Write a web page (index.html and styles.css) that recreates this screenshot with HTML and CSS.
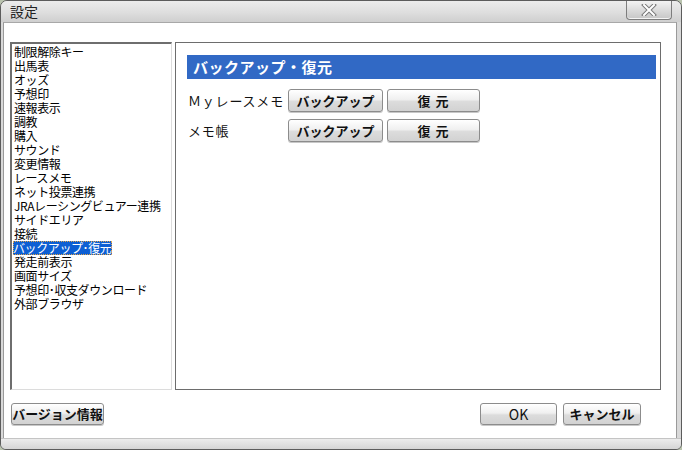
FILE: index.html
```html
<!DOCTYPE html>
<html lang="ja">
<head>
<meta charset="utf-8">
<title>設定</title>
<link rel="stylesheet" href="styles.css">
</head>
<body>
<div class="window">
  <div class="titlebar">
    <span class="title">設定</span>
    <button class="close" aria-label="閉じる">
      <svg width="22" height="12" viewBox="0 0 22 12">
        <path d="M6 1 L16 11 M16 1 L6 11" stroke="#7a7a7a" stroke-width="4" stroke-linecap="square"/>
        <path d="M6 1 L16 11 M16 1 L6 11" stroke="#ffffff" stroke-width="2" stroke-linecap="square"/>
      </svg>
    </button>
  </div>
  <div class="content">
    <div class="main">
      <ul class="list">
        <li>制限解除キー</li>
        <li>出馬表</li>
        <li>オッズ</li>
        <li>予想印</li>
        <li>速報表示</li>
        <li>調教</li>
        <li>購入</li>
        <li>サウンド</li>
        <li>変更情報</li>
        <li>レースメモ</li>
        <li>ネット投票連携</li>
        <li>JRAレーシングビュアー連携</li>
        <li>サイドエリア</li>
        <li>接続</li>
        <li><span class="selected">バックアップ･復元</span></li>
        <li>発走前表示</li>
        <li>画面サイズ</li>
        <li>予想印･収支ダウンロード</li>
        <li>外部ブラウザ</li>
      </ul>
      <div class="panel">
        <div class="panel-header">バックアップ・復元</div>
        <div class="row">
          <span class="label">Ｍｙレースメモ</span>
          <button class="btn btn-backup">バックアップ</button>
          <button class="btn btn-restore">復 元</button>
        </div>
        <div class="row">
          <span class="label">メモ帳</span>
          <button class="btn btn-backup">バックアップ</button>
          <button class="btn btn-restore">復 元</button>
        </div>
      </div>
    </div>
    <div class="footer">
      <button class="btn btn-version">バージョン情報</button>
      <div class="spacer"></div>
      <button class="btn btn-ok">OK</button>
      <button class="btn btn-cancel">キャンセル</button>
    </div>
  </div>
  <div class="bottom-frame"></div>
</div>
</body>
</html>
```
FILE: styles.css
```css
html, body {
  margin: 0;
  padding: 0;
  background: #b9c3ae;
}
body {
  width: 682px;
  height: 450px;
  overflow: hidden;
  font-family: "Noto Sans CJK JP", "Noto Sans", sans-serif;
  color: #111;
}
.window {
  box-sizing: border-box;
  width: 682px;
  height: 450px;
  display: flex;
  flex-direction: column;
  border: 1px solid #5c5c5c;
  border-radius: 7px 7px 6px 6px;
  background: #d9d9d9;
  overflow: hidden;
}
.titlebar {
  box-sizing: border-box;
  height: 21px;
  display: flex;
  align-items: flex-start;
  background: linear-gradient(#ececec, #dedede 55%, #cfcfcf);
}
.title {
  font-size: 14px;
  line-height: 20px;
  padding-left: 9px;
  color: #222;
}
.close {
  margin-left: auto;
  margin-right: 9px;
  width: 46px;
  height: 19px;
  padding: 0;
  border: 1px solid #7d7d7d;
  border-top: none;
  border-radius: 0 0 4px 4px;
  background: linear-gradient(#f3f3f3, #dcdcdc 50%, #c6c6c6);
  display: flex;
  align-items: center;
  justify-content: center;
  box-shadow: inset 0 -1px 0 #f4f4f4;
}
.content {
  flex: 1;
  background: #ffffff;
  margin: 0 4px 0 2px;
  border-left: 1px solid #9a9a9a;
  border-right: 1px solid #9a9a9a;
  border-top: 1px solid #a8a8a8;
  padding: 19px 0 0 6px;
  display: flex;
  flex-direction: column;
}
.main {
  display: flex;
  height: 348px;
  gap: 3px;
}
.list {
  box-sizing: border-box;
  width: 162px;
  height: 348px;
  margin: 0;
  padding: 1px 0 0 2px;
  list-style: none;
  border-top: 2px solid #6e6e6e;
  border-left: 2px solid #6e6e6e;
  border-right: 1px solid #dcdcdc;
  border-bottom: 1px solid #dcdcdc;
  font-size: 12px;
  line-height: 14px;
  letter-spacing: -0.4px;
  color: #000;
}
.list li {
  height: 14px;
  white-space: nowrap;
}
.selected {
  display: inline-block;
  background: #0d5fd3;
  color: #fff;
  outline: 1px dotted #e1a44a;
  outline-offset: -1px;
  padding: 0 1px 0 0;
  margin-left: -1px;
}
.panel {
  box-sizing: border-box;
  width: 486px;
  height: 348px;
  border: 1px solid #6d6d6d;
  padding: 12px 4px 0 11px;
}
.panel-header {
  height: 24px;
  background: #3169c5;
  color: #fff;
  font-weight: bold;
  font-size: 15px;
  line-height: 24px;
  padding-left: 6px;
  letter-spacing: 0.5px;
}
.row {
  display: flex;
  align-items: center;
  gap: 4px;
  height: 23px;
  margin-top: 10px;
}
.row + .row {
  margin-top: 7px;
}
.label {
  width: 96px;
  font-size: 13px;
  letter-spacing: 0.8px;
  padding-left: 1px;
  white-space: nowrap;
}
.btn {
  box-sizing: border-box;
  height: 23px;
  padding: 0;
  border: 1px solid #8c8c8c;
  border-radius: 3px;
  background: linear-gradient(#ffffff, #f0f0f0 45%, #dcdcdc 55%, #d2d2d2);
  box-shadow: 0 1px 0 #c8c8c8;
  font-family: "Noto Sans CJK JP", "Noto Sans", sans-serif;
  font-weight: bold;
  font-size: 13px;
  line-height: 20px;
  color: #111;
}
.btn-backup { width: 95px; }
.btn-restore { width: 93px; letter-spacing: 1px; }
.footer {
  display: flex;
  align-items: center;
  margin-top: 13px;
  padding-left: 1px;
  padding-right: 35px;
}
.spacer { flex: 1; }
.btn-version { width: 93px; height: 22px; }
.btn-ok {
  width: 77px;
  height: 22px;
  font-weight: normal;
  font-size: 14px;
}
.btn-cancel {
  width: 78px;
  height: 22px;
  margin-left: 6px;
}
.bottom-frame {
  height: 10px;
  background: linear-gradient(#ececec, #d5d5d5);
  border-top: 1px solid #c4c4c4;
}
```
